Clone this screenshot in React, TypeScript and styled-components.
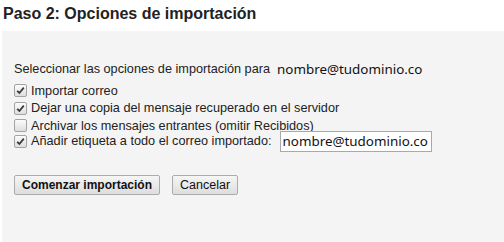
import React from 'react';
import styled, { createGlobalStyle } from 'styled-components';

const GlobalStyle = createGlobalStyle`
	html, body {
		margin: 0;
		padding: 0;
		background: #ffffff;
	}
	body {
		font-family: "Liberation Sans", Arial, sans-serif;
		color: #222222;
	}
`;

const Page = styled.div`
	display: flex;
	flex-direction: column;
	height: 242px;
	overflow: hidden;
`;

const Title = styled.h2`
	margin: 0;
	padding: 4px 0 0 3px;
	height: 27px;
	font-size: 16px;
	line-height: 20px;
	font-weight: bold;
	color: #222222;
`;

const Panel = styled.div`
	flex: 1;
	margin-left: 2px;
	background: #f4f4f4;
	padding: 28px 0 0 12px;
	font-size: 12.7px;
`;

const Intro = styled.div`
	display: flex;
	align-items: center;
	height: 20px;
	margin-bottom: 3px;
`;

const Address = styled.span`
	font-family: "Noto Sans", sans-serif;
	font-size: 13.4px;
	color: #111111;
	margin-left: 7px;
`;

const Option = styled.label<{ $tight?: boolean }>`
	display: flex;
	align-items: center;
	gap: 4px;
	height: ${({ $tight }) => ($tight ? '21px' : '17.5px')};
	margin-top: ${({ $tight }) => ($tight ? '-4px' : '0')};
`;

const Box = styled.span`
	display: inline-flex;
	align-items: center;
	justify-content: center;
	box-sizing: border-box;
	width: 13px;
	height: 13px;
	border: 1px solid #a3a3a3;
	border-radius: 2px;
	background: linear-gradient(#fcfcfc, #dedede);
`;

const LabelInput = styled.input`
	box-sizing: border-box;
	width: 152px;
	height: 21px;
	margin: 0 0 0 4px;
	padding: 0 2px;
	border: 1px solid #a9a9a9;
	background: #ffffff;
	font-family: "Noto Sans", sans-serif;
	font-size: 13.4px;
	color: #111111;
	outline: none;
`;

const Actions = styled.div`
	display: flex;
	gap: 12px;
	margin-top: 23px;
`;

const Button = styled.button<{ $primary?: boolean }>`
	box-sizing: border-box;
	height: 20px;
	padding: 0 7px;
	border: 1px solid #acacac;
	border-radius: 2px;
	background: linear-gradient(#f6f6f6, #dddddd);
	font-family: "Liberation Sans", Arial, sans-serif;
	font-size: ${({ $primary }) => ($primary ? '12px' : '12.5px')};
	font-weight: ${({ $primary }) => ($primary ? 'bold' : 'normal')};
	color: #111111;
	line-height: 18px;
`;

const Check = ({ checked }: { checked: boolean }) => (
	<Box>
		{checked && (
			<svg width="9" height="9" viewBox="0 0 9 9">
				<path d="M1.2 4.8 L3.4 7 L7.8 1.6" fill="none" stroke="#3a3a3a" strokeWidth="1.8" />
			</svg>
		)}
	</Box>
);

const options = [
	{ text: 'Importar correo', checked: true },
	{ text: 'Dejar una copia del mensaje recuperado en el servidor', checked: true },
	{ text: 'Archivar los mensajes entrantes (omitir Recibidos)', checked: false },
];

export default function App() {
	return (
		<Page>
			<GlobalStyle />
			<Title>Paso 2: Opciones de importación</Title>
			<Panel>
				<Intro>
					Seleccionar las opciones de importación para
					<Address>nombre@tudominio.co</Address>
				</Intro>
				{options.map((o) => (
					<Option key={o.text}>
						<Check checked={o.checked} />
						{o.text}
					</Option>
				))}
				<Option $tight>
					<Check checked />
					Añadir etiqueta a todo el correo importado:
					<LabelInput defaultValue="nombre@tudominio.co" />
				</Option>
				<Actions>
					<Button $primary>Comenzar importación</Button>
					<Button>Cancelar</Button>
				</Actions>
			</Panel>
		</Page>
	);
}
